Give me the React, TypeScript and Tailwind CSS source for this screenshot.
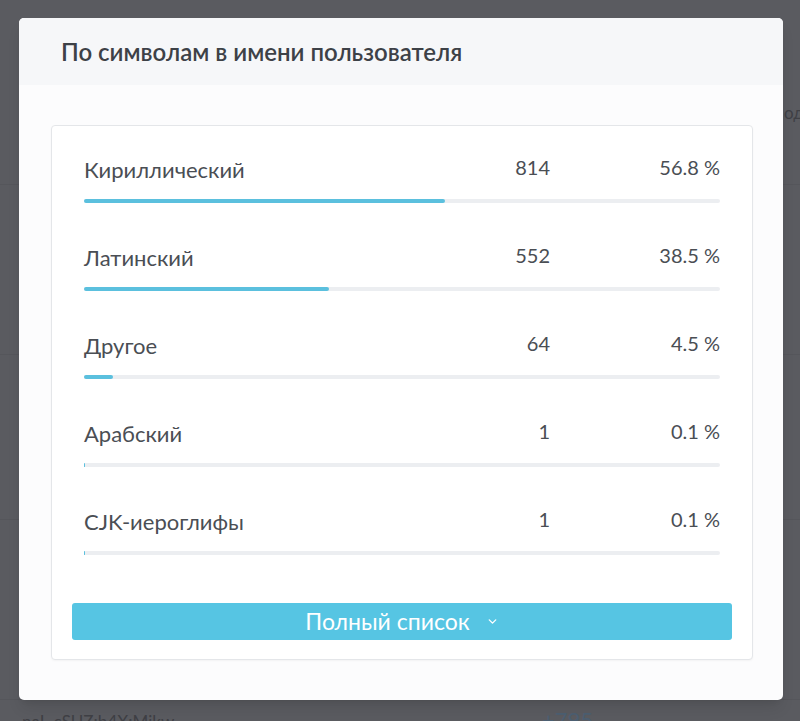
import { ChevronDown } from "lucide-react";

const rows = [
  { label: "Кириллический", count: 814, pct: 56.8 },
  { label: "Латинский", count: 552, pct: 38.5 },
  { label: "Другое", count: 64, pct: 4.5 },
  { label: "Арабский", count: 1, pct: 0.1 },
  { label: "CJK-иероглифы", count: 1, pct: 0.1 },
];

function StatRow({ label, count, pct }: { label: string; count: number; pct: number }) {
  return (
    <div className="mb-[41px]">
      <div className="grid grid-cols-[1fr_100px_170px] items-start">
        <span className="text-[22px] leading-[28px] text-[#4a4e54]">{label}</span>
        <span className="text-right text-[20px] leading-[22px] text-[#4a4e54]">{count}</span>
        <span className="text-right text-[20px] leading-[22px] text-[#4a4e54]">{pct} %</span>
      </div>
      <div className="mt-[15px] h-[4px] w-full rounded-full bg-[#eceef1]">
        <div className="h-full rounded-full bg-[#5bc0de]" style={{ width: `${pct}%` }} />
      </div>
    </div>
  );
}

export default function App() {
  return (
    <div
      className="relative h-[721px] w-[800px] overflow-hidden bg-[#5a5b60]"
      style={{ fontFamily: "Lato, 'Noto Sans', sans-serif" }}
    >
      {/* page behind the overlay */}
      <div className="flex flex-col text-[#3f4045]">
        <div className="h-[185px] border-b border-[#55565b]" />
        <div className="h-[170px] border-b border-[#55565b]" />
        <div className="h-[165px] border-b border-[#55565b]" />
        <div className="h-[180px] border-b border-[#55565b]" />
        <div className="flex items-baseline pl-[22px] pt-[3px]">
          <span className="w-[520px] text-[17px]">naL-cSUZ:b4X:Mikw</span>
          <span className="text-[22px] text-[#4c5f72]">+795</span>
        </div>
      </div>
      <span className="absolute left-[784px] top-[100px] text-[17px] text-[#3f4045]">од</span>

      <div className="absolute left-[19px] top-[18px] flex h-[682px] w-[764px] flex-col overflow-hidden rounded-[5px] bg-[#fcfcfd] shadow-lg">
        <div className="flex h-[67px] shrink-0 items-center bg-[#f6f7f9] px-[42px]">
          <h2 className="text-[24px] font-semibold text-[#3d4147]">По символам в имени пользователя</h2>
        </div>
        <div className="pl-[32px] pr-[30px] pt-[40px]">
          <div className="h-[535px] rounded-[4px] border border-[#e4e6e9] bg-white shadow-[0_1px_2px_rgba(0,0,0,0.04)]">
            <div className="px-[32px] pt-[30px]">
              {rows.map((r) => (
                <StatRow key={r.label} {...r} />
              ))}
            </div>
            <div className="px-[20px] pt-[7px]">
              <button className="flex h-[37px] w-full items-center justify-center gap-[16px] rounded-[3px] bg-[#56c5e3] text-[23px] text-white">
                Полный список
                <ChevronDown className="h-[13px] w-[13px]" strokeWidth={2.5} />
              </button>
            </div>
          </div>
        </div>
      </div>
    </div>
  );
}
